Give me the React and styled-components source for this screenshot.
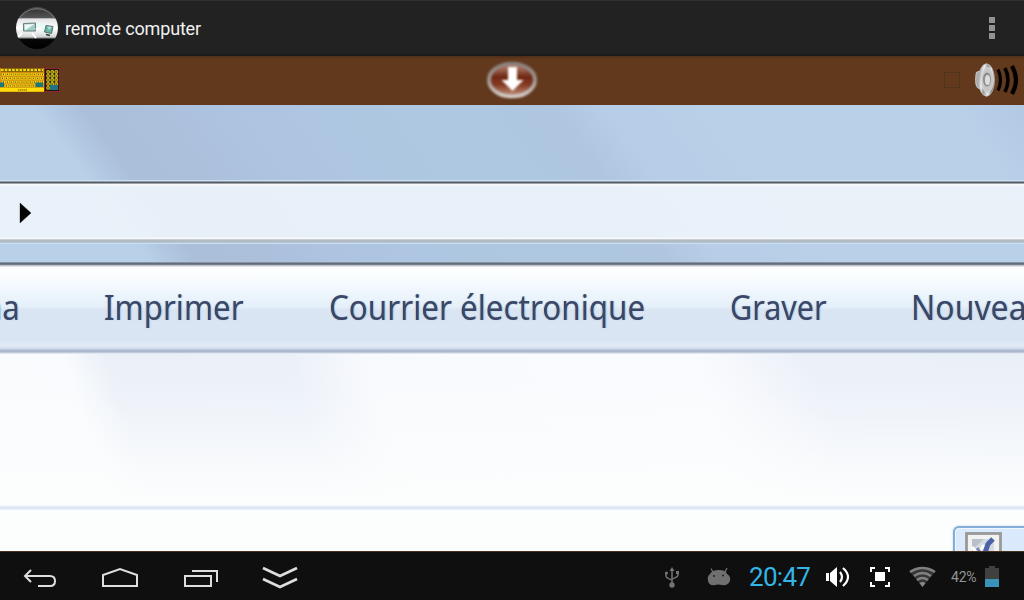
import React from 'react';
import styled, { createGlobalStyle } from 'styled-components';

const Global = createGlobalStyle`
  * { box-sizing: border-box; }
  body { margin: 0; background: #000; overflow: hidden; }
`;

const Screen = styled.div`
  width: 1024px;
  height: 600px;
  display: flex;
  flex-direction: column;
  overflow: hidden;
  font-family: Roboto, 'Noto Sans', sans-serif;
`;

const ActionBar = styled.header`
  height: 56px;
  flex: none;
  display: flex;
  align-items: center;
  padding: 1px 27px 0 15px;
  background: #222;
  border-top: 1px solid #303030;
  border-bottom: 2px solid #1b1b1b;
`;

const Title = styled.h1`
  margin: 1px auto 0 6px;
  font-size: 18px;
  line-height: 24px;
  letter-spacing: -0.17px;
  font-weight: 400;
  color: #f1f1f1;
`;

const Overflow = styled.div`
  display: grid;
  gap: 2px;
  width: 6px;
  margin-right: 2px;
`;

const Dot = styled.i`
  width: 6px;
  height: 6px;
  background: #929292;
`;

const Tools = styled.div`
  height: 49px;
  flex: none;
  display: grid;
  grid-template-columns: 1fr 52px 1fr;
  align-items: center;
  padding-bottom: 2px;
  background: linear-gradient(#4d2e19, #63391d 3px);
`;

const ToolsEnd = styled.div`
  display: flex;
  align-items: center;
  justify-content: flex-end;
  padding-right: 4px;
  gap: 14px;
`;

const EmptyBox = styled.div`
  width: 16px;
  height: 16px;
  border: 1px solid #50331d;
`;

const Glass = styled.div`
  height: 157px;
  flex: none;
  display: flex;
  flex-direction: column;
  background: linear-gradient(53.4deg,
    #b9d0e9 0, #b8d0e8 120px, #abbfdb 158px, #acc0dc 215px, #aec5e1 300px,
    #aec8e1 420px, #aec8e1 480px, #afc5e0 535px, #b7cde8 578px, #b9d0e8 660px,
    #b9d0e9 860px, #b1c9e3 916px);
`;

const AddressBar = styled.div`
  height: 64px;
  margin-top: 75px;
  display: flex;
  align-items: center;
  padding: 1px 0 0 19px;
  background:
    linear-gradient(#d0e0f0 0 1px, #8e9ba8 1px 2px, #555f68 2px 3px, #9da3a9 3px 4px, #f7f9fb 4px 5px, rgba(247, 249, 251, 0) 7px 57px, #f8f9fc 58px 59px, #c6cdd3 59px 60px, #b0bbc3 60px 62px, #b5c5d3 62px 63px, #cbdcec 63px 64px),
    linear-gradient(rgba(239, 245, 251, 0.89), rgba(239, 245, 251, 0.89));
`;

const CommandBar = styled.nav`
  height: 92px;
  flex: none;
  display: grid;
  grid-template-columns: 104px 226px 400px 181px 113px;
  align-items: center;
  overflow: hidden;
  padding-bottom: 2px;
  background: linear-gradient(#8994a2 0 1px, #626b78 1px 2px, #757e8a 2px 3px, #c0c5cb 3px 4px,
    #fff 5px, #fafdff 14px, #e8f2fb 40px, #e5eff9 45px, #dae5f3 48px,
    #dae5f3 78px, #e2eaf6 84px, #ccd8e7 87px, #afbdd0 88px, #a7b6ca 90px, #d5deea 91px, #edf2f8 92px);
`;

const Command = styled.span`
  display: block;
  width: max-content;
  justify-self: start;
  margin-left: ${(p) => p.$pull || 0}px;
  transform: scaleX(${(p) => p.$stretch || 0.92});
  transform-origin: left center;
  font: 400 34px/46px 'Noto Sans', 'Open Sans', sans-serif;
  color: #3b4669;
  text-shadow: -1px 0 1px rgba(224, 174, 110, 0.45), 1px 0 1px rgba(70, 180, 245, 0.55);
  filter: blur(0.5px);
  white-space: nowrap;
`;

const Details = styled.section`
  height: 156px;
  flex: none;
  background:
    linear-gradient(rgba(237, 243, 250, 0) 151px, #edf3fa 152px, #dbe6f5 153px 154px, #edf3fa 156px),
    linear-gradient(rgba(252, 253, 253, 0) 0, rgba(252, 253, 253, 0.12) 36px, rgba(252, 253, 253, 0.85) 125px, #fcfdfd 150px),
    linear-gradient(72deg, #f9fbfd 0, #f9fbfe 108px, #ebf0f8 148px, #ebf0f9 320px,
      #f8fafd 395px, #fafbfe 705px, #f6f8fc 740px, #ebf0f9 815px, #eaf0f8 1024px);
`;

const Files = styled.section`
  height: 41px;
  flex: none;
  display: flex;
  justify-content: flex-end;
  padding-top: 16px;
  overflow: hidden;
  background: #fcfdfd;
`;

const FileItem = styled.div`
  width: 71px;
  height: 44px;
  padding: 4px 0 0 10px;
  border: 2px solid #84add9;
  border-width: 2px 0 0 2px;
  border-radius: 6px 0 0;
  background: #dbe9fc;
  box-shadow: inset 1px 1px #eef6ff, 0 0 2px #a6c4e5;
`;

const NavBar = styled.footer`
  height: 49px;
  flex: none;
  display: flex;
  align-items: center;
  border-top: 1px solid #47301e;
  background: #0f0f0f;
`;

const NavButtons = styled.div`
  display: grid;
  grid-template-columns: repeat(4, 80px);
  justify-items: center;
  align-items: center;
  margin-right: auto;
  padding-top: 3px;
`;

const Status = styled.div`
  display: flex;
  align-items: center;
  padding: 2px 25px 0 0;
`;

const Clock = styled.time`
  width: 63px;
  margin: 0 13px 0 18px;
  font-size: 26px;
  line-height: 32px;
  letter-spacing: -0.7px;
  font-weight: 400;
  color: #33b5e5;
  white-space: nowrap;
`;

const Percent = styled.span`
  width: 28px;
  margin: 0 6px 0 15px;
  font-size: 14px;
  letter-spacing: -0.2px;
  color: #929292;
`;

const Battery = styled.div`
  width: 14px;
  height: 19px;
  position: relative;
  background: linear-gradient(#404040 0 11px, #3993b8 11px);
  &::before {
    content: '';
    position: absolute;
    left: 4px;
    top: -2px;
    width: 6px;
    height: 2px;
    background: #404040;
  }
`;

const Icon = styled.svg`
  display: block;
  flex: none;
  overflow: visible;
  margin-left: ${(p) => p.$gap || 0}px;
`;

function AppLogo() {
  return (
    <Icon width="44" height="46" viewBox="0 0 44 46">
      <defs>
        <linearGradient id="ball" x1="0" y1="0" x2="0" y2="1">
          <stop offset="0" stopColor="#555" />
          <stop offset=".07" stopColor="#383838" />
          <stop offset=".26" stopColor="#555" />
          <stop offset=".28" stopColor="#e0e2e3" />
          <stop offset=".5" stopColor="#fff" />
          <stop offset=".7" stopColor="#d7dadb" />
          <stop offset=".74" stopColor="#8c8e8f" />
          <stop offset=".76" stopColor="#070707" />
          <stop offset="1" stopColor="#000" />
        </linearGradient>
      </defs>
      <circle cx="22" cy="23" r="21" fill="url(#ball)" />
      <path d="M4 14A21 21 0 0 1 40 14" fill="none" stroke="#898989" strokeWidth=".8" />
      <path d="M8.500 18.500L20.500 18V26H8.500Z" fill="#9fcdc8" stroke="#5c7170" strokeWidth=".9" />
      <path d="M9.500 19.500L19.500 19 10 25.500Z" fill="#eff8f7" />
      <path d="M31 20.500L38 21.500 36.500 28.500 29.500 27Z" fill="#69b5a8" stroke="#4c6664" strokeWidth=".9" />
      <path d="M32 21.500L37 22 34 25Z" fill="#b5e2dd" />
      <path d="M31 29.500L35 30.500" stroke="#343a3a" strokeWidth="1.800" />
      <path d="M22 20Q26 15 30 20L28 26Q25 20 20 25Z" fill="#e6fafa" />
      <path d="M3 32L7 28M17 28L21 33" stroke="#fff" strokeWidth="2" />
    </Icon>
  );
}

function KeyboardIcon() {
  const keys = [];
  for (let row = 0; row < 4; row += 1) {
    for (let col = 0; col < 11; col += 1) {
      keys.push(<rect key={`${row}-${col}`} x={2 + col * 3.9 - (row % 2)} y={4.9 + row * 3.8} width="3.200" height="3.100" rx=".5" fill="#fbe015" stroke="#c98a12" strokeWidth=".4" />);
      keys.push(<path key={`m${row}-${col}`} d={`M${3.5 + col * 3.9 - (row % 2)} ${5.7 + row * 3.8}v1.500`} stroke="#5f4f10" strokeWidth="1" />);
    }
  }
  const pad = [];
  for (let row = 0; row < 5; row += 1) {
    for (let col = 0; col < 3; col += 1) {
      pad.push(<rect key={`${row}-${col}`} x={46.8 + col * 4.1} y={2.6 + row * 4} width="2.600" height="2.700" rx=".5" fill="#6b6112" stroke="#dcca1b" strokeWidth="1" />);
    }
  }
  return (
    <Icon width="60" height="24" viewBox="0 0 60 24">
      <path d="M0 0H44V24H0Z" fill="#d2900f" />
      <path d="M1 2H43" stroke="#4a3a0a" strokeWidth="3" />
      <path d="M1 2H43" stroke="#f5db12" strokeWidth="2.200" strokeDasharray="2.700 1" />
      {keys}
      <path d="M0 20H44V23.500H0Z" fill="#ffdc08" />
      <path d="M18 22H27" stroke="#64520c" strokeWidth="1.200" strokeDasharray="1.500 .5" />
      <path d="M0 14.500H4V19H0ZM35.500 14.500H43V19H35.500Z" fill="#1b7678" />
      <rect x="44.500" y=".5" width="15" height="23" fill="#201a0c" stroke="#a32240" strokeWidth=".8" />
      {pad}
      <path d="M50 17H58V22H50Z" fill="#1d7484" />
    </Icon>
  );
}

function DownloadIcon() {
  return (
    <Icon width="52" height="38" viewBox="0 0 52 38">
      <defs>
        <linearGradient id="rust" x1="0" y1="0" x2="0" y2="1">
          <stop offset="0" stopColor="#b8907e" />
          <stop offset=".22" stopColor="#945947" />
          <stop offset=".4" stopColor="#6f2814" />
          <stop offset=".65" stopColor="#853b22" />
          <stop offset="1" stopColor="#c79a85" />
        </linearGradient>
        <linearGradient id="ring" x1="0" y1="0" x2="0" y2="1">
          <stop offset="0" stopColor="#88817d" />
          <stop offset=".5" stopColor="#a09691" />
          <stop offset="1" stopColor="#d5ceca" />
        </linearGradient>
        <filter id="soft"><feGaussianBlur stdDeviation=".8" /></filter>
      </defs>
      <ellipse cx="26" cy="19" rx="23.200" ry="16.600" fill="url(#rust)" stroke="url(#ring)" strokeWidth="3.500" filter="url(#soft)" />
      <path d="M22 6H31V19H37.500L26.500 30 15.500 19H22Z" fill="#fff" filter="url(#soft)" />
    </Icon>
  );
}

function SpeakerIcon() {
  return (
    <Icon width="46" height="36" viewBox="0 0 46 36">
      <defs>
        <linearGradient id="steel" x1="0" y1="0" x2="1" y2=".35">
          <stop offset="0" stopColor="#777" />
          <stop offset=".35" stopColor="#eee" />
          <stop offset=".55" stopColor="#999" />
          <stop offset=".8" stopColor="#f2f2f2" />
          <stop offset="1" stopColor="#777" />
        </linearGradient>
      </defs>
      <path d="M2 12Q1 10 6 9L12 2V33L6 27Q0 26 2 12Z" fill="#aaa" stroke="#ddd" strokeWidth=".7" />
      <ellipse cx="12.500" cy="18" rx="8" ry="16.300" fill="url(#steel)" stroke="#b5b5b5" strokeWidth=".8" />
      <ellipse cx="13.500" cy="18" rx="6" ry="12.500" fill="#c6c6c6" stroke="#ddd" strokeWidth=".7" />
      <ellipse cx="13" cy="17.500" rx="4" ry="7" fill="#8c8c8c" />
      <ellipse cx="13.500" cy="18" rx="2.600" ry="5" fill="#ddd" />
      <path d="M24 7.500Q29 18 24 28.500" fill="none" stroke="#000" strokeWidth="3.200" />
      <path d="M31 6Q37 18 31 30" fill="none" stroke="#000" strokeWidth="3.600" />
      <path d="M38 4Q46 18 38 32" fill="none" stroke="#000" strokeWidth="4.200" />
    </Icon>
  );
}

function FileIcon() {
  return (
    <Icon width="37" height="38" viewBox="0 0 37 38">
      <rect x="1.500" y="1.500" width="34" height="40" fill="#f2f2f2" stroke="#999" strokeWidth="2.800" />
      <path d="M7 7H29V38H7Z" fill="#d5dae0" />
      <path d="M7 18L19 7H7Z" fill="#b8c1ca" />
      <path d="M7 15L12 21" stroke="#fff" strokeWidth="3" />
      <path d="M14 20L19 13" stroke="#fff" strokeWidth="3" />
      <path d="M19 24L23 12 28 7" fill="none" stroke="#4b62a8" strokeWidth="5" />
      <path d="M12 16L15 20" stroke="#7c8bb8" strokeWidth="3" />
    </Icon>
  );
}

const navStroke = { fill: 'none', stroke: '#dedede', strokeWidth: 2 };

export default function App() {
  return (
    <>
      <Global />
      <Screen>
        <ActionBar>
          <AppLogo />
          <Title>remote computer</Title>
          <Overflow><Dot /><Dot /><Dot /></Overflow>
        </ActionBar>
        <Tools>
          <KeyboardIcon />
          <DownloadIcon />
          <ToolsEnd><EmptyBox /><SpeakerIcon /></ToolsEnd>
        </Tools>
        <Glass>
          <AddressBar>
            <Icon width="13" height="22" viewBox="0 0 13 22"><path d="M1 1L12 11 1 21Z" fill="#050505" stroke="#050505" strokeOpacity=".35" /></Icon>
          </AddressBar>
        </Glass>
        <CommandBar>
          <Command $pull={-17}>na</Command>
          <Command $stretch={0.918}>Imprimer</Command>
          <Command $stretch={0.923} $pull={-1}>Courrier électronique</Command>
          <Command $stretch={0.897}>Graver</Command>
          <Command $stretch={0.94}>Nouvea</Command>
        </CommandBar>
        <Details />
        <Files><FileItem><FileIcon /></FileItem></Files>
        <NavBar>
          <NavButtons>
            <Icon width="34" height="20" viewBox="0 0 34 20"><path d="M8 2L2 8 8 14M2 8H27Q32 8 32 13 32 18 27 18H15" {...navStroke} /></Icon>
            <Icon width="38" height="20" viewBox="0 0 38 20"><path d="M2 18V7L19 1 36 7V18Z" {...navStroke} /></Icon>
            <Icon $gap={2} width="36" height="20" viewBox="0 0 36 20"><path d="M2 8H28V18H2ZM9 3H34V14" {...navStroke} /></Icon>
            <Icon width="34" height="22" viewBox="0 0 34 22"><path d="M0 1L17 9 34 1M0 12L17 20 34 12" {...navStroke} strokeWidth="2.800" /></Icon>
          </NavButtons>
          <Status>
            <Icon width="14" height="21" viewBox="0 0 14 21">
              <path d="M7 18V2M1 5V9Q1 11 7 13M13 5V8Q13 10 7 12" fill="none" stroke="#747474" strokeWidth="1.500" />
              <path d="M4.500 4L7 0 9.500 4ZM11 4H14V7H11Z" fill="#747474" />
              <circle cx="1.500" cy="6" r="1.500" fill="#747474" /><circle cx="7" cy="18" r="2.700" fill="#747474" />
            </Icon>
            <Icon $gap={28} width="24" height="18" viewBox="0 0 24 18">
              <path d="M4 .5L6 4M20 0L18 4" stroke="#707070" strokeWidth="1.300" />
              <path d="M3 6Q5 2 12 2T20 6Q24 8 23 13 21 18 15 17 11 16 8 17 2 18 1 13 0 8 3 6Z" fill="#707070" />
              <circle cx="7" cy="8" r="1" fill="#222" /><circle cx="16" cy="7.500" r="1" fill="#222" />
            </Icon>
            <Clock>20:47</Clock>
            <Icon $gap={1} width="24" height="20" viewBox="0 0 24 20">
              <path d="M0 6H3V14H0ZM4 6L11 0V20L4 14Z" fill="#fff" />
              <path d="M14 5Q18 10 14 15M17 1Q27 10 17 19" fill="none" stroke="#fff" strokeWidth="2.200" />
            </Icon>
            <Icon $gap={20} width="20" height="20" viewBox="0 0 20 20">
              <path d="M1 5V1H5M15 1H19V5M19 15V19H15M5 19H1V15" fill="none" stroke="#fff" strokeWidth="2" />
              <path d="M5 5H15V14H5Z" fill="#fff" />
            </Icon>
            <Icon $gap={19} width="27" height="20" viewBox="0 0 27 20">
              <path d="M1 5Q13.500 -4 26 5L13.500 20Z" fill="#353535" />
              <path d="M1 5Q13.500 -3 26 5M5 9Q13.500 3 22 9M8 13Q13.500 9 19 13" fill="none" stroke="#808080" strokeWidth="2.500" />
              <path d="M10.500 16Q13.500 14 16.500 16L13.500 20Z" fill="#898989" />
            </Icon>
            <Percent>42%</Percent>
            <Battery />
          </Status>
        </NavBar>
      </Screen>
    </>
  );
}
